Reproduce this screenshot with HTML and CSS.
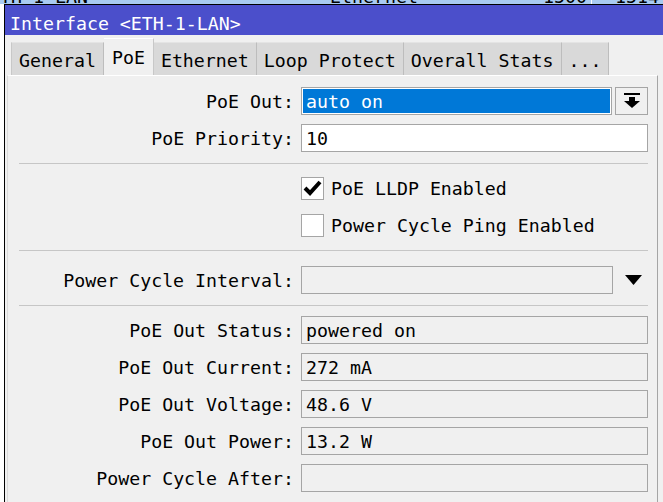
FILE: index.html
```html
<!DOCTYPE html>
<html>
<head>
    <meta charset="utf-8" />
    <title>Interface &lt;ETH-1-LAN&gt;</title>
    <link rel="stylesheet" href="styles.css">
</head>
<body>
<div class="backdrop">
    <div class="back-row">
        <span class="cell name">TH-1-LAN</span>
        <span class="cell type">Ethernet</span>
        <span class="cell num">1500</span>
        <span class="cell num last">1514</span>
    </div>
</div>
<div class="window">
    <div class="titlebar">Interface &lt;ETH-1-LAN&gt;</div>
    <div class="tabs">
        <div class="tab first">General</div>
        <div class="tab active">PoE</div>
        <div class="tab">Ethernet</div>
        <div class="tab">Loop Protect</div>
        <div class="tab">Overall Stats</div>
        <div class="tab">...</div>
    </div>
    <div class="panel">
        <div class="row">
            <span class="label">PoE Out:</span>
            <div class="combo">
                <div class="field selected">auto on</div>
                <div class="drop-btn">
                    <svg width="16" height="16" viewBox="0 0 16 16">
                        <rect x="0" y="0" width="16" height="2" fill="#000"/>
                        <rect x="5" y="4" width="6" height="5" fill="#000"/>
                        <polygon points="0,8 16,8 8,15" fill="#000"/>
                    </svg>
                </div>
            </div>
        </div>
        <div class="row">
            <span class="label">PoE Priority:</span>
            <div class="field edit">10</div>
        </div>
        <div class="sep"></div>
        <div class="row">
            <span></span>
            <div class="check">
                <span class="box">
                    <svg width="21" height="21" viewBox="0 0 21 21">
                        <path d="M3 10 L8 15 L18 4" fill="none" stroke="#000" stroke-width="4"/>
                    </svg>
                </span>
                <span>PoE LLDP Enabled</span>
            </div>
        </div>
        <div class="row">
            <span></span>
            <div class="check">
                <span class="box"></span>
                <span>Power Cycle Ping Enabled</span>
            </div>
        </div>
        <div class="sep wide"></div>
        <div class="row">
            <span class="label">Power Cycle Interval:</span>
            <div class="combo">
                <div class="field short"></div>
                <div class="drop-arrow">
                    <svg width="17" height="10" viewBox="0 0 17 10">
                        <polygon points="0,0 17,0 8.5,10" fill="#000"/>
                    </svg>
                </div>
            </div>
        </div>
        <div class="sep"></div>
        <div class="row">
            <span class="label">PoE Out Status:</span>
            <div class="field">powered on</div>
        </div>
        <div class="row">
            <span class="label">PoE Out Current:</span>
            <div class="field">272 mA</div>
        </div>
        <div class="row">
            <span class="label">PoE Out Voltage:</span>
            <div class="field">48.6 V</div>
        </div>
        <div class="row">
            <span class="label">PoE Out Power:</span>
            <div class="field">13.2 W</div>
        </div>
        <div class="row">
            <span class="label">Power Cycle After:</span>
            <div class="field"></div>
        </div>
    </div>
</div>
</body>
</html>
```

FILE: styles.css
```css
*{margin: 0;padding: 0;box-sizing: border-box;}
body{
    width: 663px;
    height: 502px;
    overflow: hidden;
    background-color: #fff;
    font-family: "DejaVu Sans Mono", "Liberation Mono", monospace;
    font-size: 18.25px;
    color: #000;
}
.backdrop{
    height: 4px;
    overflow: hidden;
    background-color: #a9cbf1;
}
.back-row{
    display: flex;
    line-height: 20px;
    margin-top: -13px;
    white-space: nowrap;
}
.back-row .cell{display: block;}
.back-row .name{width: 330px;}
.back-row .type{width: 200px;}
.back-row .num{width: 62px;text-align: right;padding-right: 4px;border-right: 1px solid #fff;}
.back-row .last{width: 71px;border-right: none;}

.window{
    margin-left: 4px;
    height: 498px;
    border-left: 1px solid #000;
    border-top: 1px solid #000;
    background-color: #f0f0f0;
}
.titlebar{
    height: 30px;
    padding: 8px 0 0 5px;
    line-height: 21px;
    background-color: #4b4fcb;
    color: #fff;
    white-space: nowrap;
}

.tabs{
    display: flex;
    align-items: flex-end;
    height: 40px;
    padding-left: 6px;
}
.tab{
    display: flex;
    align-items: center;
    height: 33px;
    padding: 2px 7px 0 7px;
    background-color: #d9d9d9;
    border-right: 1px solid #bdbdbd;
    border-top: 1px solid #e4e4e4;
    white-space: nowrap;
}
.tab.first{border-left: 1px solid #c8c8c8;}
.tab.active{
    height: 37px;
    padding: 0 8px;
    background-color: #f0f0f0;
    border-top: 1px solid #fff;
    border-right: 1px solid #c8c8c8;
}

.panel{
    display: flex;
    flex-direction: column;
    height: 427px;
    margin: 0 5px 0 2px;
    padding: 11px 9px 0 0;
    border-top: 1px solid #fff;
    border-left: 1px solid #dadada;
    border-right: 1px solid #a5a5a5;
}
.row{
    display: grid;
    grid-template-columns: 286px 347px;
    column-gap: 7px;
    align-items: center;
    height: 28px;
    flex: none;
    margin-bottom: 9px;
}
.label{
    text-align: right;
    white-space: nowrap;
    padding-top: 1px;
}
.field{
    height: 28px;
    padding: 1px 4px 0 4px;
    line-height: 26px;
    border: 1px solid #a5a5a5;
    background-color: #f0f0f0;
    white-space: nowrap;
}
.field.edit{background-color: #fff;}
.field.selected{
    background-color: #0078d7;
    color: #fff;
    box-shadow: inset 0 0 0 1px #fff;
}
.combo{
    display: flex;
    gap: 3px;
}
.combo .field{flex: 1;}
.combo .field.short{flex: none;width: 312px;}
.drop-btn{
    display: flex;
    align-items: center;
    justify-content: center;
    width: 33px;
    height: 28px;
    border: 1px solid #a5a5a5;
    background-color: #f0f0f0;
}
.drop-arrow{
    display: flex;
    align-items: center;
    justify-content: center;
    flex: 1;
    padding-left: 3px;
}
.drop-arrow svg, .drop-btn svg, .box svg{display: block;}

.check{
    display: flex;
    align-items: center;
    gap: 7px;
    white-space: nowrap;
}
.box{
    display: block;
    width: 23px;
    height: 23px;
    border: 1px solid #a5a5a5;
    background-color: #fff;
}

.sep{
    flex: none;
    height: 1px;
    margin: 2px 0 10px 11px;
    background-color: #c6c6c6;
}
.sep.wide{margin-bottom: 15px;}
```
